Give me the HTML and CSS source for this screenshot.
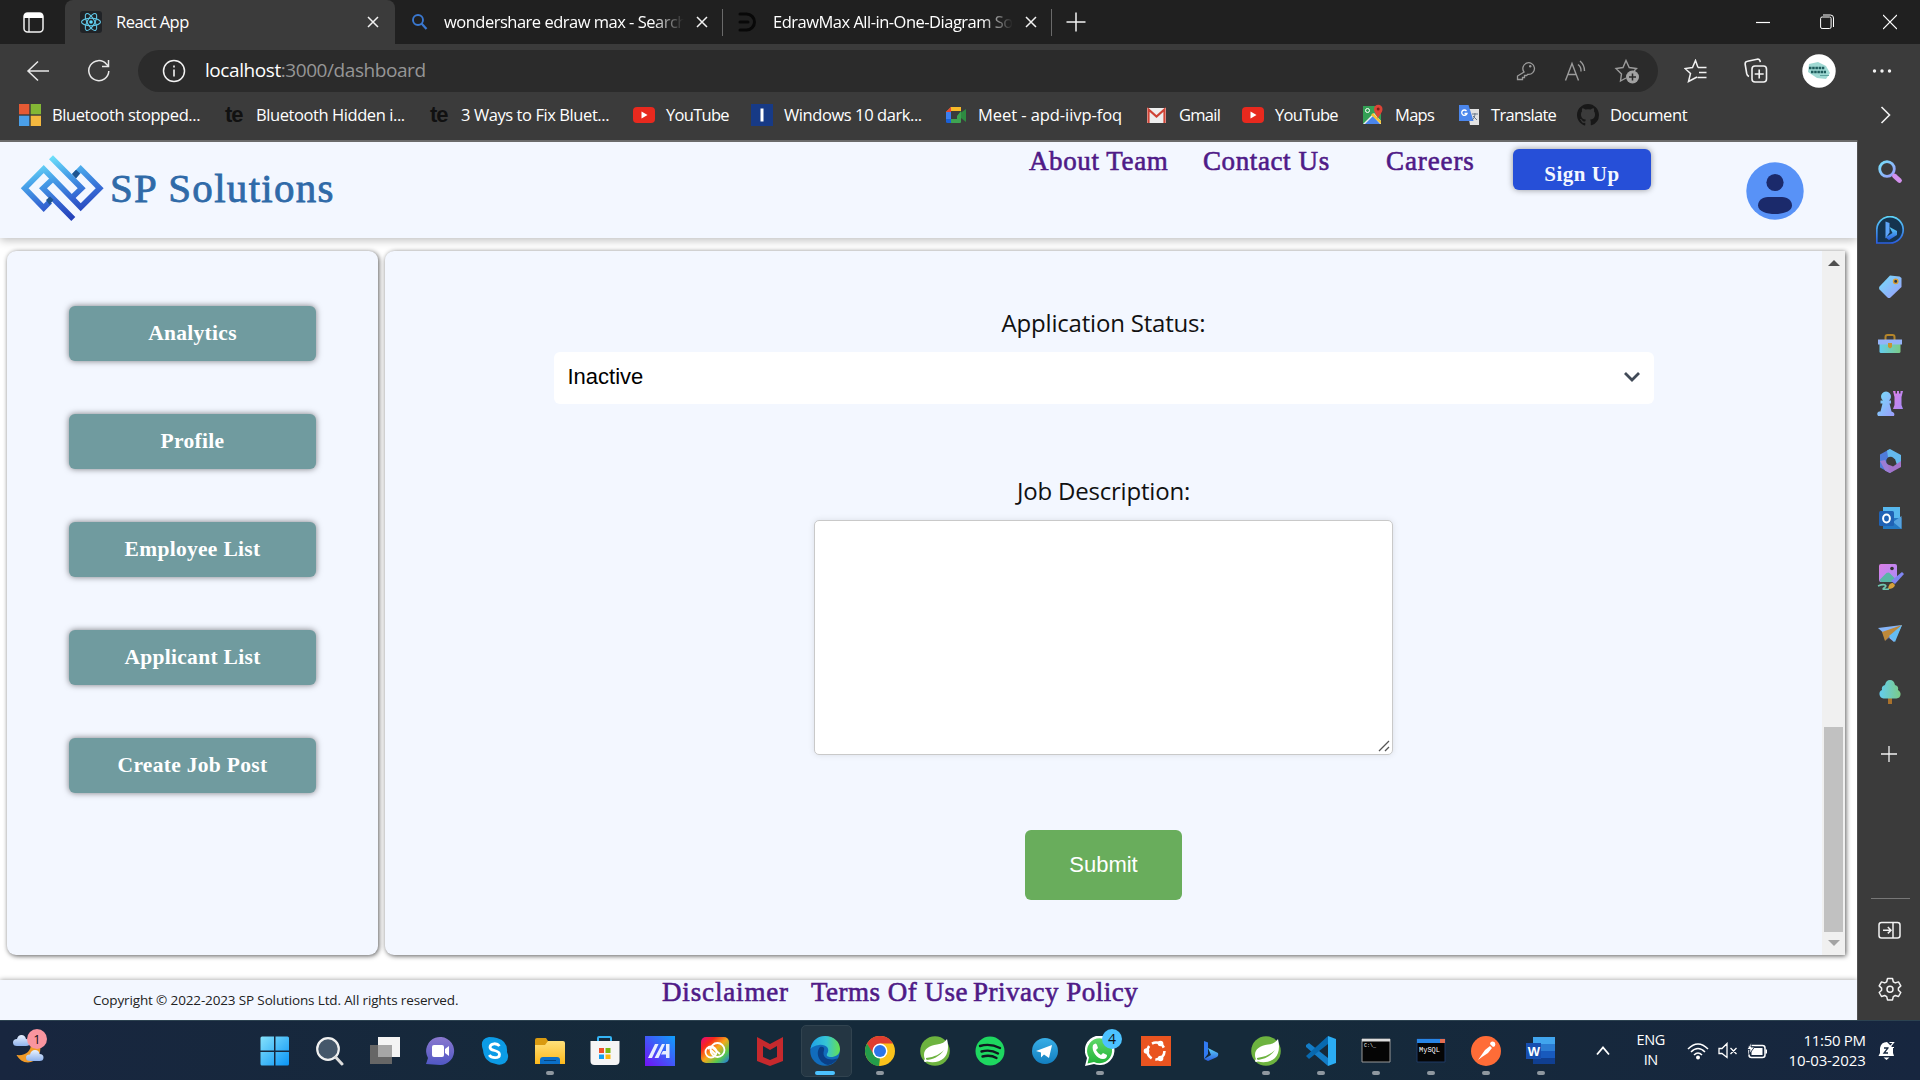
FILE: index.html
```html
<!DOCTYPE html>
<html lang="en">
<head>
<meta charset="utf-8">
<title>React App</title>
<link rel="stylesheet" href="styles.css">
</head>
<body>
<svg class="defs" width="0" height="0" aria-hidden="true">
  <defs>
    <linearGradient id="sky" x1="0" y1="0" x2="1" y2="1"><stop offset="0" stop-color="#74dff9"/><stop offset="1" stop-color="#9c9cfb"/></linearGradient>
    <linearGradient id="logo" gradientUnits="userSpaceOnUse" x1="30" y1="2" x2="48" y2="66"><stop offset="0" stop-color="#6fe3fb"/><stop offset=".35" stop-color="#469fe8"/><stop offset=".7" stop-color="#3465d2"/><stop offset="1" stop-color="#2440b8"/></linearGradient>
    <linearGradient id="pink" x1="0" y1="0" x2="1" y2="1"><stop offset="0" stop-color="#dc7fe6"/><stop offset="1" stop-color="#a88cf8"/></linearGradient>
    <linearGradient id="green" x1="0" y1="0" x2="1" y2="0"><stop offset="0" stop-color="#63cdf0"/><stop offset="1" stop-color="#7ccb86"/></linearGradient>
    <linearGradient id="bing" x1="0" y1="0" x2="0" y2="1"><stop offset="0" stop-color="#5ed4f8"/><stop offset="1" stop-color="#2a5ee0"/></linearGradient>
    <linearGradient id="win" x1="0" y1="0" x2="1" y2="1"><stop offset="0" stop-color="#85e2fb"/><stop offset="1" stop-color="#0a94f5"/></linearGradient>
    <linearGradient id="chat" x1="0" y1="0" x2="0" y2="1"><stop offset="0" stop-color="#8a78cf"/><stop offset="1" stop-color="#5057c4"/></linearGradient>
    <linearGradient id="folder" x1="0" y1="0" x2="0" y2="1"><stop offset="0" stop-color="#ffe07a"/><stop offset="1" stop-color="#fcb81c"/></linearGradient>
    <linearGradient id="arm" x1="0" y1="1" x2="1" y2="0"><stop offset="0" stop-color="#7310f5"/><stop offset="1" stop-color="#0fa0fb"/></linearGradient>
    <linearGradient id="cc" x1="0" y1="0" x2="1" y2="1"><stop offset="0" stop-color="#e5077f"/><stop offset=".25" stop-color="#f7281a"/><stop offset=".5" stop-color="#f7a81a"/><stop offset=".75" stop-color="#57c94d"/><stop offset="1" stop-color="#1c6ff0"/></linearGradient>
    <linearGradient id="edge1" x1="0" y1="0" x2="1" y2="0"><stop offset="0" stop-color="#1fa2e8"/><stop offset=".55" stop-color="#36c5d4"/><stop offset="1" stop-color="#66e14e"/></linearGradient>
    <linearGradient id="tg" x1="0" y1="0" x2="0" y2="1"><stop offset="0" stop-color="#38aee6"/><stop offset="1" stop-color="#127fc0"/></linearGradient>
    <linearGradient id="wa" x1="0" y1="0" x2="0" y2="1"><stop offset="0" stop-color="#5fd968"/><stop offset="1" stop-color="#23b33a"/></linearGradient>
    <linearGradient id="cloud" x1="0" y1="0" x2="0" y2="1"><stop offset="0" stop-color="#e8f2ff"/><stop offset="1" stop-color="#8fb2ec"/></linearGradient>
    <symbol id="i-x" viewBox="0 0 12 14"><path d="M1 2l10 10M11 2L1 12" stroke="#f2f2f2" stroke-width="1.5" fill="none"/></symbol>
    <symbol id="i-yt" viewBox="0 0 22 22"><rect y="3" width="22" height="16" rx="4" fill="#e8291e"/><path d="M8.500 7.500v7l6-3.500z" fill="#fff"/></symbol>
    <symbol id="i-spring" viewBox="0 0 30 30"><circle cx="15" cy="15" r="14.800" fill="#6db33f"/><path d="M27 3c-2 3-5 5-10 5.500C9 9.500 4 13 4 19c0 3 1 5 3 6.500C13 27 20 26 24 22c4-4 5-11 3-19z" fill="#fff"/><path d="M6 24c7-.500 13-3 18-10-4 4-9 7-18 8z" fill="#6db33f"/><circle cx="5.500" cy="24.500" r="1.500" fill="#fff"/></symbol>
  </defs>
</svg>
<div class="screen">
  <header class="tabs">
    <div class="tab-actions"><svg width="21" height="21" viewBox="0 0 21 21"><rect x="1" y="1" width="19" height="19" rx="3.500" fill="none" stroke="#f2f2f2" stroke-width="1.500"/><path d="M1 6V4a3 3 0 0 1 3-3h13a3 3 0 0 1 3 3v2z" fill="#fff"/><path d="M6 6v14" stroke="#f2f2f2" stroke-width="1.300"/></svg></div>
    <div class="tab tab-active">
      <svg width="22" height="22" viewBox="0 0 22 22"><rect width="22" height="22" rx="3" fill="#202327"/><g fill="none" stroke="#61c8e8" stroke-width="1.100"><ellipse cx="11" cy="11" rx="9.500" ry="3.700"/><ellipse cx="11" cy="11" rx="9.500" ry="3.700" transform="rotate(60 11 11)"/><ellipse cx="11" cy="11" rx="9.500" ry="3.700" transform="rotate(120 11 11)"/></g><circle cx="11" cy="11" r="1.800" fill="#61dafb"/></svg>
      <span class="tab-title">React App</span>
      <svg width="12" height="14"><use href="#i-x"/></svg>
    </div>
    <div class="tab tab-search">
      <svg width="22" height="22" viewBox="0 0 22 22"><circle cx="9" cy="9" r="5" fill="none" stroke="#3a78d0" stroke-width="1.900"/><path d="M12.500 12.500l5 5.500" stroke="#3a78d0" stroke-width="2.200"/></svg>
      <span class="tab-title">wondershare edraw max - Search</span>
      <svg width="12" height="14"><use href="#i-x"/></svg>
    </div>
    <div class="tab tab-edraw">
      <svg width="22" height="22" viewBox="0 0 22 22"><path d="M3 3h6.500a8 8 0 0 1 0 16H3M3 11h8" fill="none" stroke="#080808" stroke-width="3" stroke-linecap="round"/></svg>
      <span class="tab-title">EdrawMax All-in-One-Diagram So</span>
      <svg width="12" height="14"><use href="#i-x"/></svg>
    </div>
    <svg class="new-tab" width="20" height="20" viewBox="0 0 20 20"><path d="M10 .500v19M.500 10h19" stroke="#f2f2f2" stroke-width="1.500"/></svg>
    <div class="window-buttons">
      <svg width="14" height="16" viewBox="0 0 14 16"><path d="M0 8.500h14" stroke="#fff" stroke-width="1.200"/></svg>
      <svg width="14" height="16" viewBox="0 0 14 16"><rect x=".600" y="3" width="10.500" height="11.500" rx="1.500" fill="none" stroke="#fff"/><path d="M3 1h7.500a3 3 0 0 1 3 3v9" fill="none" stroke="#fff"/></svg>
      <svg width="14" height="16" viewBox="0 0 14 16"><path d="M0 1l14 14M14 1L0 15" stroke="#fff" stroke-width="1.200"/></svg>
    </div>
  </header>

  <div class="toolbar">
    <svg class="back" width="24" height="22" viewBox="0 0 24 22"><path d="M12 1.500L2 11l10 9.500M2 11h21" fill="none" stroke="#e8e8e8" stroke-width="1.500"/></svg>
    <svg class="reload" width="24" height="24" viewBox="0 0 24 24"><path d="M21.800 12a10 10 0 1 1-2.500-7l2 2M21.500 1v6.500H15" fill="none" stroke="#e8e8e8" stroke-width="1.500"/></svg>
    <div class="address">
      <svg width="24" height="24" viewBox="0 0 24 24"><circle cx="12" cy="12" r="10.500" fill="none" stroke="#f2f2f2" stroke-width="1.500"/><path d="M12 10.500v7M12 6.500v2" stroke="#f2f2f2" stroke-width="1.600"/></svg>
      <span class="url"><b>localhost</b>:3000/dashboard</span>
      <svg width="20" height="22" viewBox="0 0 20 22"><path d="M8 12.500a5.800 5.800 0 1 1 4 2.300L10.500 16H8.500v2H6.500v2H1.500v-3.500z" transform="translate(0 -.500)" fill="none" stroke="#9b9b9b" stroke-width="1.300"/><circle cx="14.200" cy="6.300" r="1.200" fill="#9b9b9b"/></svg>
      <svg width="24" height="24" viewBox="0 0 24 24"><path d="M2.500 21.500L9 4.500l6.500 17M5 15.500h8M15 5.500a8 8 0 0 1 3 7M17 2a13 13 0 0 1 4.500 10" fill="none" stroke="#9b9b9b" stroke-width="1.400"/></svg>
      <svg width="26" height="26" viewBox="0 0 26 26"><path d="M12 20l-5.500 3 1-7L2 10.500l7-1L12 2.500l3.200 7 7.300 1-2.500 2.500" fill="none" stroke="#9b9b9b" stroke-width="1.400"/><circle cx="18.500" cy="19" r="6.500" fill="#a2a2a2"/><path d="M18.500 15.500v7M15 19h7" stroke="#2b2b2b" stroke-width="1.500"/></svg>
    </div>
    <svg class="favs" width="24" height="24" viewBox="0 0 24 24"><path d="M14 8.500h8.500M15 13.500h7.500M13.500 18.500h9M14 8.500L11.500 1.500 8.500 8.500l-7.500 1 5.500 5L4.500 22.500 13 18" fill="none" stroke="#f2f2f2" stroke-width="1.500"/></svg>
    <svg class="collections" width="24" height="26" viewBox="0 0 24 26"><rect x="8" y="8" width="14.500" height="16" rx="3" fill="none" stroke="#f2f2f2" stroke-width="1.600"/><path d="M15.200 11.500v9M10.700 16h9M5 18.500C3.500 18 3 17 2.700 15.500L1.200 6.500c-.300-2 .500-3 2.300-3.300L13 1.200c2-.400 3 .600 3.300 3" fill="none" stroke="#f2f2f2" stroke-width="1.600"/></svg>
    <svg class="profile" width="34" height="34" viewBox="0 0 34 34"><circle cx="17" cy="17" r="16.700" fill="#fff"/><path d="M7 10l9-2 8 4 4 7-4 6-9-1-9-6z" fill="#9fd9d3"/><path d="M7 14h16M9 18h15" stroke="#1e5c5c" stroke-width="2.300" stroke-dasharray="2.500 .7"/><path d="M18 21.500h9" stroke="#4d9591" stroke-width=".8"/></svg>
    <svg class="more" width="20" height="6" viewBox="0 0 20 6"><circle cx="2.500" cy="3" r="1.700" fill="#f2f2f2"/><circle cx="10" cy="3" r="1.700" fill="#f2f2f2"/><circle cx="17.500" cy="3" r="1.700" fill="#f2f2f2"/></svg>
  </div>

  <nav class="bookmarks">
    <a><svg width="22" height="22"><path fill="#e55a34" d="M0 0h10.300v10.300H0z"/><path fill="#83b735" d="M11.700 0H22v10.300H11.700z"/><path fill="#4a9fe8" d="M0 11.700h10.300V22H0z"/><path fill="#f4b83f" d="M11.700 11.700H22V22H11.700z"/></svg><span>Bluetooth stopped...</span></a>
    <a><i class="te">te</i><span>Bluetooth Hidden i...</span></a>
    <a><i class="te">te</i><span>3 Ways to Fix Bluet...</span></a>
    <a><svg width="22" height="22"><use href="#i-yt"/></svg><span class="tight">YouTube</span></a>
    <a><svg width="22" height="22"><path fill="#173a86" d="M0 0h22v22H0z"/><path fill="#fff" d="M9.500 4.500h3v13h-3z"/></svg><span>Windows 10 dark...</span></a>
    <a><svg width="22" height="22"><path d="M6 3h10v4H6v3H1V8z" fill="#f7b928"/><path d="M6 3v5H1z" fill="#e84435"/><path d="M1 8h5v7H1z" fill="#3c7ff0"/><path d="M1 15h5v4H2.500A1.500 1.500 0 0 1 1 17.500z" fill="#1a60d8"/><path d="M6 15h6v-3l4-5v11a1 1 0 0 1-1 1H6z" fill="#3ea351"/><path d="M16 8.500L21 5v13l-5-4z" fill="#2e8b41"/></svg><span class="loose">Meet - apd-iivp-foq</span></a>
    <a><svg width="22" height="22"><path fill="#eee" d="M1 4h19v15H1z"/><path d="M2.500 19V5.500l8 7 8-7V19" stroke="#cf4436" stroke-width="2.200" fill="none"/></svg><span class="tight">Gmail</span></a>
    <a><svg width="22" height="22"><use href="#i-yt"/></svg><span class="tight">YouTube</span></a>
    <a><svg width="22" height="22"><path fill="#34a055" d="M1 2h18v18H1z"/><path d="M1 20L12 9l7 8v3z" fill="#eee"/><path d="M3 20l8-8 7 8z" fill="#4a86ec"/><path d="M9 11l10 9v-3l-8-8z" fill="#f7c331"/><path d="M16 15c-1-4-4-6-4-10a4 4 0 0 1 8.500 0c0 4-3.500 6-4.500 10z" fill="#dc4436"/><circle cx="16.200" cy="5" r="1.500" fill="#7c1f19"/><circle cx="5.500" cy="6.500" r="2" stroke="#fff" fill="none"/></svg><span class="tight">Maps</span></a>
    <a><svg width="22" height="22"><path fill="#e2e2e2" d="M9 5h12v16H12z"/><path d="M1 1h9.500l5 16H1z" fill="#4b86ec"/><path d="M8.500 7A2.700 2.700 0 1 0 9 9.500H6.500" fill="none" stroke="#fff" stroke-width="1.300"/><path d="M14 10h6M17 9c0 3-1 6-3 7m1-4l4 4" stroke="#68788b" fill="none"/></svg><span class="tight">Translate</span></a>
    <a><svg width="22" height="22" viewBox="0 0 16 16"><path fill="#181818" d="M8 0C3.580 0 0 3.580 0 8c0 3.540 2.290 6.530 5.470 7.590.400.070.550-.170.550-.380v-1.490c-2.230.480-2.700-1.070-2.700-1.070-.360-.920-.890-1.170-.890-1.170-.730-.500.050-.490.050-.490.810.060 1.230.830 1.230.830.720 1.230 1.880.870 2.340.660.070-.520.280-.870.510-1.070-1.780-.200-3.650-.890-3.650-3.950 0-.870.310-1.590.820-2.150-.080-.200-.360-1.020.080-2.120 0 0 .670-.210 2.200.820a7.600 7.600 0 0 1 4 0c1.530-1.040 2.200-.820 2.200-.820.440 1.100.160 1.920.080 2.120.510.560.820 1.270.820 2.150 0 3.070-1.870 3.750-3.650 3.950.290.250.540.730.540 1.480v2.200c0 .210.150.460.550.380A8 8 0 0 0 16 8c0-4.420-3.580-8-8-8z"/></svg><span>Document</span></a>
    <svg class="overflow" width="11" height="18" viewBox="0 0 11 18"><path d="M1.500 1l8 8-8 8" fill="none" stroke="#f2f2f2" stroke-width="1.600"/></svg>
  </nav>

  <div class="body">
    <div class="page">
      <header class="site-header">
        <div class="brand">
          <svg width="84" height="68" viewBox="0 0 84 68"><g fill="none" stroke="url(#logo)" stroke-width="5.600"><path d="M30 47.500L23.700 54 4.700 34.300 23.700 15l37 38.300 19-19L60.700 15 54 22"/><path d="M31 3.300l30.700 31L51.300 44.300"/><path d="M53.300 65L23 34.300l10-9.600"/></g><path d="M52 20l4-4.200 4 3.600-4 5zM26 46l4-3.500 3.500 3.200-4 5z" fill="#1f5590"/></svg>
          <span>SP Solutions</span>
        </div>
        <nav class="site-nav">
          <a>About Team</a><a>Contact Us</a><a>Careers</a>
          <button class="signup">Sign Up</button>
        </nav>
        <svg class="avatar" width="58" height="58" viewBox="0 0 58 58"><circle cx="29" cy="29" r="28.700" fill="#5892f7"/><circle cx="29" cy="20.500" r="8.600" fill="#1b2a6b"/><path d="M22 35h14c6 0 10 4 10 8.500 0 6-9 8.500-17 8.500s-17-2.500-17-8.500C12 39 16 35 22 35z" fill="#1b2a6b"/></svg>
      </header>
      <main class="panels">
        <aside class="menu">
          <button>Analytics</button>
          <button>Profile</button>
          <button>Employee List</button>
          <button>Applicant List</button>
          <button>Create Job Post</button>
        </aside>
        <section class="content">
          <form class="job">
            <label>Application Status:</label>
            <div class="select"><span>Inactive</span><svg width="18" height="12" viewBox="0 0 18 12"><path d="M2 2l7 7 7-7" fill="none" stroke="#414a57" stroke-width="2.800"/></svg></div>
            <label class="second">Job Description:</label>
            <div class="textarea"><svg width="12" height="12" viewBox="0 0 12 12"><path d="M1 11L11 1M7 11l4-4" stroke="#555" stroke-width="1.300"/></svg></div>
            <button class="submit" type="button">Submit</button>
          </form>
          <div class="scrollbar"><svg width="12" height="6"><path d="M0 6l6-6 6 6z" fill="#505050"/></svg><div class="thumb"></div><svg width="12" height="6"><path d="M0 0l6 6 6-6z" fill="#a3a3a3"/></svg></div>
        </section>
      </main>
      <footer class="site-footer">
        <span class="copy">Copyright © 2022-2023 SP Solutions Ltd. All rights reserved.</span>
        <a>Disclaimer</a><a>Terms Of Use</a><a>Privacy Policy</a>
      </footer>
    </div>
    <aside class="sidebar">
      <div><svg width="28" height="28"><circle cx="11" cy="11" r="7.300" fill="none" stroke="url(#sky)" stroke-width="2.800"/><path d="M18.500 18l5 4.500" stroke="#d391ee" stroke-width="4.800" stroke-linecap="round"/></svg></div>
      <div><svg width="28" height="28"><path d="M.800 27V14a13.200 13.200 0 1 1 13.200 13z" fill="#15344f" stroke="url(#bing)" stroke-width="1.700"/><path d="M9.500 5.500l4 1.500v9.500l-4 6z" fill="#5da4f9"/><path d="M13.500 11l7.500 4v4l-8 5-3.500-2.500 7-4.500z" fill="url(#bing)"/></svg></div>
      <div><svg width="28" height="28"><path d="M14 2.500L23.500 3.500 25.500 5v9L14.500 24.500q-1.500 1-3 0l-8-8q-1-1.500 0-3z" fill="url(#sky)"/><circle cx="19.700" cy="8.300" r="2.200" fill="#27384a" stroke="#d99f36" stroke-width="1.400"/></svg></div>
      <div><svg width="28" height="28"><path d="M9.500 9V6q0-2 2-2h5q2 0 2 2v3" fill="none" stroke="#b5852a" stroke-width="2"/><path d="M3.500 12h21v8.500q0 1.500-1.500 1.500H5q-1.500 0-1.500-1.500z" fill="url(#green)"/><path d="M2 8.500h24v5H2z" fill="#95b3f8"/><path d="M12 12h4v4l-2 1.500-2-1.500z" fill="#c79532"/></svg></div>
      <div><svg width="28" height="28"><path d="M17 2h2.500v2.500H21V2h2v2.500h1.500V2H27l-1.500 6v8l1.500 4H17l1.500-4V8z" fill="url(#pink)"/><path d="M2 27q-2-3 1-4.500h1.500l2-8H4.500v-3H7a5 5 0 1 1 6 0h2v3h-1.500l2 8q4 1 2.500 4.500z" fill="url(#sky)"/></svg></div>
      <div><svg width="28" height="28"><path d="M14 2L4 7.500v13L14 26l3-2-4-4V9z" fill="#4f7cda"/><path d="M11 3.500L14 2l11 6v8l-4 2-2-6-7-2z" fill="#64b9ee"/><path d="M25 14v6L14 26 9 23.500l2-7 6 3z" fill="#a374ca"/><path d="M4 14l5 9.500 5 2.500-2-7-3-6z" fill="#9c7dd4"/><circle cx="14.500" cy="14" r="4.300" fill="#3b3b3b"/></svg></div>
      <div><svg width="28" height="28"><path d="M7 3h17v18H7z" fill="#57b8ee"/><path d="M7 14h18.500v11H7z" fill="#2478c2"/><path d="M17 18l8.500-6v13z" fill="#56a3df"/><rect x="3" y="7" width="15" height="15" rx="1.500" fill="#2062b4"/><ellipse cx="10.500" cy="14.500" rx="3.400" ry="3.900" fill="none" stroke="#fff" stroke-width="2"/></svg></div>
      <div><svg width="28" height="28"><rect x="3" y="2" width="18" height="18" rx="2" fill="url(#pink)"/><path d="M3.500 18l7-7q2-1 3 0l7 7-1 2H5z" fill="#58b6a6"/><circle cx="16" cy="6.500" r="1.800" fill="#333"/><path d="M15 19L26 10l2 2-9 10z" fill="#8086f3"/><path d="M12 27q1-7 5-6l2 2q-1 4-7 4z" fill="#d5a13a"/><path d="M2 24q5-2 7-1t-1 3 5 1" fill="none" stroke="#70c5af" stroke-width="1.700"/></svg></div>
      <div class="plane"><svg width="28" height="28"><path d="M2 5L26 2l-8 17-6-5z" fill="#86b5f8"/><path d="M26 2L6 9l3 9z" fill="#bd893b"/><path d="M26 2L9 18l4-3z" fill="#4c68b8"/><path d="M26 2L13 13l6 6z" fill="#65bdf2"/></svg></div>
      <div><svg width="28" height="28"><path d="M12 18h4v8h-4z" fill="#a9712b"/><path d="M14 2q4 0 5 5 4 1 3 5 3 2 2.500 5t-4 3.500H7.500q-3.500-.500-4-4T6 12q-1-4 3-5 1-5 5-5z" fill="url(#green)"/></svg></div>
      <div class="add"><svg width="18" height="18"><path d="M9 1v16M1 9h16" stroke="#f2f2f2" stroke-width="1.300"/></svg></div>
      <hr>
      <div><svg width="24" height="20"><rect x="1" y="1.500" width="21" height="15.500" rx="2.500" fill="none" stroke="#f2f2f2" stroke-width="1.500"/><path d="M15 1.500V17M5 9.200h8M9.800 6l3.200 3.200-3.200 3.200" stroke="#f2f2f2" stroke-width="1.500" fill="none"/></svg></div>
      <div><svg width="24" height="24" viewBox="0 0 24 24"><path d="M9.500 1.500h5l.8 3.300 2 1.100 3.200-1 2.300 4-2.400 2.200v2.200l2.400 2.200-2.300 4-3.200-1-2 1.100-.8 3.300h-5l-.8-3.300-2-1.100-3.200 1-2.300-4 2.400-2.200v-2.200L1.200 8.900l2.300-4 3.200 1 2-1.100z" fill="none" stroke="#f2f2f2" stroke-width="1.500" stroke-linejoin="round"/><circle cx="12" cy="12.200" r="3" fill="none" stroke="#f2f2f2" stroke-width="1.500"/></svg></div>
    </aside>
  </div>

  <footer class="taskbar">
    <div class="weather"><svg width="38" height="38"><path d="M27 12c2 11-4 18-12 18.500-5 0-9-3-11.500-7.500C13 24 18 19 18 12z" fill="#f19a27"/><path d="M4 14q-4 0-4-3.500t4-3.500q1-4 4.500-4T13 7q4 0 4 3.500T13 14z" fill="url(#cloud)"/><path d="M17 29q-4 0-4-3.300t4-3.200q1-4.500 5-4.500t4.500 4q4 0 4 3.500T26.500 29z" fill="url(#cloud)"/></svg><b class="badge">1</b></div>
    <div class="apps">
      <div><svg width="30" height="30"><path d="M.500 2q0-1.500 1.500-1.500h12v14H.500zM15.500.500h12q1.500 0 1.500 1.500v12.500H15.500zM.500 16H14v13.500H2q-1.500 0-1.500-1.500zM15.500 16H29v12q0 1.500-1.500 1.500h-12z" fill="url(#win)"/></svg></div>
      <div><svg width="30" height="30"><circle cx="13" cy="13" r="10.800" fill="#45576a" stroke="#f0f0f0" stroke-width="2.200"/><path d="M20.500 21l6.500 7" stroke="#ddd" stroke-width="3" stroke-linecap="round"/></svg></div>
      <div><svg width="30" height="30"><path d="M8 1h22v20H8z" fill="#f4f4f4"/><path d="M0 9h22v19H0z" fill="#666"/><path d="M8 9h14v12H8z" fill="#a6a6a6"/></svg></div>
      <div><svg width="30" height="30"><path d="M1 28l2-6A14 14 0 1 1 15 29z" fill="url(#chat)"/><rect x="7" y="9" width="12" height="12" rx="2" fill="#fff"/><path d="M20 13l4-3v10l-4-3z" fill="#fff"/></svg></div>
      <div><svg width="30" height="30"><path d="M9 1q5 0 8 1 11 3 10 14 3 7-2 11-5 3-9 1Q4 26 3 14-1 3 9 1z" fill="#0c9be6"/><path d="M19.500 10q-2-2.500-5.500-2.200-4 .400-4 3.400 0 2.300 4.500 3.300 5 1.200 5 4 0 3.200-4.500 3.200-4 0-5.800-2.700" fill="none" stroke="#fff" stroke-width="2.800"/></svg></div>
      <div class="run"><svg width="30" height="30"><path d="M0 4q0-2 2-2h9l2 3v5H0z" fill="#d99a10"/><path d="M0 9h10l3-4h15q2 0 2 2v21H0z" fill="url(#folder)"/><path d="M5 28v-4q0-3 3-3h14q3 0 3 3v4z" fill="#0b6fc8"/><path d="M9 24.500h12" stroke="#06447f"/></svg></div>
      <div><svg width="30" height="30"><path d="M8 7V2q0-1 1-1h11q1 0 1 1v5" stroke="#34b4f4" stroke-width="2" fill="none"/><path d="M.500 5h29v20q0 4-4 4h-21q-4 0-4-4z" fill="#f5f5f5"/><path d="M9 12h5v5H9z" fill="#f0502a"/><path d="M15.500 12h5v5h-5z" fill="#7cb910"/><path d="M9 18.500h5v4.500H9z" fill="#139ff0"/><path d="M15.500 18.500h5v4.500h-5z" fill="#fbb810"/></svg></div>
      <div><svg width="30" height="30"><path d="M0 0h30v30H0z" fill="url(#arm)"/><path d="M3 22L10 8h3.500L7 22zM9.500 22L17 8h3l-6.500 14zM21 8h3.500v14H21v-3.500h-5l2-3.500h3z" fill="#e8eeff"/></svg></div>
      <div><svg width="30" height="30"><rect x="1" y="1" width="28" height="26" rx="5" fill="url(#cc)"/><g fill="none" stroke="#fff" stroke-width="1.800"><circle cx="11" cy="16" r="5.500"/><circle cx="17.500" cy="14" r="7"/><path d="M20 18l-7-6q-3-1-5 1M16 19l-5-5"/></g></svg></div>
      <div><svg width="30" height="30"><path d="M2 1l13 7 13-7v24l-13 5L2 25zM8 10v11l7 3 7-3V10l-7 4z" fill="#c6292d" fill-rule="evenodd"/></svg></div>
      <div class="run current"><svg width="30" height="30"><circle cx="15" cy="15" r="14.800" fill="#116cbc"/><path d="M.500 13C2 4 8 0 15 0c9 0 15 6 15 13 0 6-5 8-9 8-3 0-5-1-4-3 4-6-2-10-8-9-4 .500-7 2-8.500 4z" fill="url(#edge1)"/><path d="M10 11c-5 6-1 16 8 18 5-1 8-4 10-7-6 3-17 2-14-8 1-3-2-4-4-3z" fill="#0a3f86"/></svg></div>
      <div class="run"><svg width="30" height="30"><circle cx="15" cy="15" r="15" fill="#fbc21b"/><path d="M2 7.500A15 15 0 0 1 28 7.500H15L8 19z" fill="#df3d30"/><path d="M2 7.500L9 19l6 3-1 8A15 15 0 0 1 2 7.500z" fill="#249c4b"/><circle cx="15" cy="15" r="7.500" fill="#fff"/><circle cx="15" cy="15" r="6" fill="#2d75e8"/></svg></div>
      <div><svg width="30" height="30"><use href="#i-spring"/></svg></div>
      <div><svg width="30" height="30"><circle cx="15" cy="15" r="14.500" fill="#1ed760"/><path d="M5 10q10-3 20 2M6.500 15.500q9-2.500 16.500 2M7.500 20.500q8-2 14 1.500" stroke="#101820" stroke-width="2.400" stroke-linecap="round" fill="none"/></svg></div>
      <div><svg width="30" height="30"><circle cx="15" cy="15" r="13" fill="url(#tg)"/><path d="M6 15l16-6-3 13-5-3.500-3 3v-5z" fill="#fff"/></svg></div>
      <div class="run"><svg width="30" height="30"><path d="M0 30l2-8A14.800 14.800 0 1 1 9 28z" fill="#fff"/><path d="M2.500 27.500l1.500-6A12.500 12.500 0 1 1 9 26z" fill="url(#wa)"/><path d="M8 9q3-3 4 0l1 3-2 2q2 4 5 5l2-2 4 2q0 4-4 4C12 23 6 15 8 9z" fill="#fff"/></svg><b class="badge">4</b></div>
      <div><svg width="30" height="30"><path d="M0 0h30v30H0z" fill="#e95420"/><circle cx="15" cy="15" r="8.500" fill="none" stroke="#fff" stroke-width="2.600" stroke-dasharray="14 3.800"/><circle cx="5.500" cy="15" r="2.800" fill="#fff"/><circle cx="19.500" cy="7.500" r="2.800" fill="#fff"/><circle cx="19.500" cy="22.500" r="2.800" fill="#fff"/></svg></div>
      <div><svg width="30" height="30"><path d="M8 5l4 1.500V18l-4 5z" fill="#317bf3"/><path d="M12 12l10 5q1 3-2 4.500L12 25l-4-2 7-4z" fill="url(#bing)"/></svg></div>
      <div class="run"><svg width="30" height="30"><use href="#i-spring"/></svg></div>
      <div class="run"><svg width="30" height="30"><path d="M22 0l8 3v24l-8 3z" fill="#2bacf3"/><path d="M0 9l3-2 19 15v8L0 11z" fill="#147dc7"/><path d="M0 20L22 0v8L3 23z" fill="#0869af"/></svg></div>
      <div class="run"><svg width="30" height="30"><path d="M1 3h28v23H1z" fill="#050505" stroke="#999"/><path d="M1 3h28v2.500H1z" fill="#ddd"/><text x="3" y="11" class="prompt">C:\_</text></svg></div>
      <div class="run"><svg width="30" height="30"><path d="M1 3h28v23H1z" fill="#050505" stroke="#1f3a66"/><path d="M1 3h28v4H1z" fill="#2785e5"/><path d="M24 3h5v4h-5z" fill="#e26d51"/><text x="3" y="16" class="mysql">MySQL</text></svg></div>
      <div class="run"><svg width="30" height="30"><circle cx="15" cy="15" r="15" fill="#ff6c37"/><path d="M7 24l7-10 5-4 2 2-4 5-6 4zM19 8a2.700 2.700 0 1 1 3 3z" fill="#fff"/></svg></div>
      <div class="run"><svg width="30" height="30"><path d="M7 1h22v7H7z" fill="#41a5ee"/><path d="M7 8h22v7H7z" fill="#2b7cd3"/><path d="M7 15h22v7H7z" fill="#185abd"/><path d="M7 22h22v6H7z" fill="#103f91"/><path d="M0 7h15v16H0z" fill="#174fb0"/><text x="1.800" y="19.500" class="word">W</text></svg></div>
    </div>
    <svg class="tray-up" width="14" height="10"><path d="M1 8.500l6-7 6 7" fill="none" stroke="#fff" stroke-width="1.800"/></svg>
    <div class="lang">ENG<br>IN</div>
    <div class="status">
      <svg width="22" height="18"><g fill="none" stroke="#fff" stroke-width="1.500"><path d="M1 7q10-10 20 0M4 10q7-7 14 0M7 13q4-4 8 0"/></g><circle cx="11" cy="15.500" r="2" fill="#fff"/></svg>
      <svg width="20" height="18"><path d="M1 6.500h3l5-5v14l-5-4H1zM12.500 6l6 6M18.500 6l-6 6" fill="none" stroke="#fff" stroke-width="1.300"/></svg>
      <svg width="22" height="18"><rect x="2" y="3.500" width="16" height="12" rx="2.500" fill="none" stroke="#fff" stroke-width="1.500"/><path d="M4.500 6h11v7h-11zM18.500 7.500H20v4h-1.500z" fill="#fff"/><path d="M4.500 0L0 7.500h3l-1 5 5.500-7.500H4z" fill="#fff" stroke="#17283f" stroke-width=".900"/></svg>
    </div>
    <div class="clock"><span>11:50 PM</span><br><span class="date">10-03-2023</span></div>
    <svg class="bell" width="18" height="20"><path d="M2 12V7q1-6 7-6l6 6v5l1 3H.500zM5.500 16.500h6l-3 2.500z" fill="#fff"/><path d="M6 7h4l-4 5h4" stroke="#17283f" stroke-width="1.300" fill="none"/><path d="M11.500 1.500h4l-4 5h4.500" stroke="#fff" stroke-width="1.200" fill="none"/></svg>
  </footer>
</div>
</body>
</html>
```
FILE: styles.css
```css
* { box-sizing: border-box; }
body { margin: 0; background: #202020; font-family: "Open Sans", "Noto Sans", sans-serif; }
button { border: 0; padding: 0; font-family: inherit; }
svg { display: block; flex: none; }
.defs { position: absolute; }
.screen { display: flex; flex-direction: column; width: 1920px; height: 1080px; overflow: hidden; }

/* tab strip */
.tabs { display: flex; align-items: center; height: 44px; background: #202020; color: #fff; font-size: 16.5px; letter-spacing: -.5px; white-space: nowrap; }
.tab-actions { width: 65px; padding-left: 23px; }
.tab { display: flex; align-items: center; height: 44px; }
.tab-title { flex: 1; overflow: hidden; margin: 0 12px 0 14px; line-height: 26px; }
.tab-active { width: 330px; padding: 0 16px 0 15px; background: #3b3b3b; border-radius: 8px 8px 0 0; }
.tab-search { width: 328px; height: 27px; padding: 0 14px 0 14px; border-right: 1px solid #6a6a6a; }
.tab-search .tab-title { margin-left: 13px; }
.tab-search .tab-title, .tab-edraw .tab-title { mask-image: linear-gradient(90deg, #000 87%, transparent); }
.tab-edraw { width: 329px; height: 27px; padding: 0 14px 0 14px; border-right: 1px solid #6a6a6a; }
.new-tab { margin-left: 14px; }
.window-buttons { display: flex; gap: 49.5px; margin-left: auto; padding-right: 23px; }

/* toolbar */
.toolbar { display: flex; align-items: center; height: 54px; background: #3b3b3b; }
.back { margin-left: 26px; }
.reload { margin-left: 37px; }
.address { display: flex; align-items: center; width: 1520px; height: 42px; margin-left: 27px; padding: 0 18px 0 24px; border-radius: 21px; background: #2b2b2b; }
.url { flex: 1; margin-left: 19px; padding-bottom: 2px; font-size: 19px; letter-spacing: -.43px; color: #969696; }
.url b { font-weight: 400; color: #fff; }
.address svg + svg { margin-left: 27px; }
.favs { margin-left: 26px; }
.collections { margin-left: 36px; }
.profile { margin-left: 34px; }
.more { margin-left: 36px; }

/* bookmarks */
.bookmarks { display: grid; grid-template-columns: 204px 205px 205px 118px 194px 201px 96px 120px 96px 119px 303px auto; align-items: center; height: 42px; padding: 0 0 8px 19px; background: #3b3b3b; color: #fff; font-size: 16.5px; letter-spacing: -.42px; white-space: nowrap; }
.bookmarks a { display: flex; align-items: center; gap: 11px; }
.bookmarks span { padding-bottom: 2px; }
.bookmarks .tight { letter-spacing: -.7px; }
.bookmarks .loose { letter-spacing: -.07px; }
.te { width: 22px; padding-left: 2px; font: bold 22px/22px "Liberation Sans", sans-serif; letter-spacing: -1px; color: #111; }

/* page */
.body { display: grid; grid-template-columns: 1857px 63px; height: 880px; }
.page { display: flex; flex-direction: column; border-top: 2px solid #6b6b6b; background: #fff; overflow: hidden; }
.site-header { display: flex; height: 96px; padding-left: 20px; background: #f3f7ff; box-shadow: 0 2px 9px rgba(0, 0, 0, .27); }
.brand { display: flex; align-items: center; width: 1009px; gap: 6px; padding-bottom: 4px; font: 41px/60px "Liberation Serif", serif; letter-spacing: 1.3px; color: #2f6aa8; -webkit-text-stroke: .8px #2f6aa8; }
.site-nav { display: flex; width: 717px; font: 27px/38px "Liberation Serif", serif; letter-spacing: .6px; color: #4f1a87; -webkit-text-stroke: .6px #4f1a87; }
.site-nav a:nth-child(1) { width: 174px; }
.site-nav a:nth-child(2) { width: 183px; }
.site-nav a:nth-child(3) { width: 127px; letter-spacing: .9px; }
.signup { width: 138px; height: 41px; margin-top: 7px; padding-top: 9px; border-radius: 6px; background: #264fd8; box-shadow: 0 0 6px rgba(0, 0, 0, .4); color: #f3f7ff; font: bold 21px/32px "Liberation Serif", serif; letter-spacing: .5px; -webkit-text-stroke: 0; }
.avatar { margin-top: 20px; }
.panels { display: grid; grid-template-columns: 371px 1460px; gap: 7px; height: 704px; margin: 13px 0 25px 7px; }
.menu, .content { border-radius: 9px; background: #f3f7ff; box-shadow: 1px 1px 5px rgba(0, 0, 0, .65); }
.menu { display: flex; flex-direction: column; align-items: center; gap: 53px; padding-top: 55px; }
.menu button { width: 247px; height: 55px; border-radius: 6px; background: #709b9f; box-shadow: 0 0 6px rgba(0, 0, 0, .5); color: #fff; font: bold 21.500px/53px "Liberation Serif", serif; letter-spacing: .3px; }
.content { display: flex; border-radius: 9px 0 0 9px; }
.job { display: flex; flex-direction: column; align-items: center; width: 1437px; padding-top: 54px; font-size: 24px; line-height: 36px; letter-spacing: -.2px; color: #111; }
.select { display: flex; align-items: center; justify-content: space-between; width: 1100px; height: 52px; margin-top: 11px; padding: 0 13px 2px 14px; border-radius: 6px; background: #fff; font: 22px/26px "Liberation Sans", sans-serif; letter-spacing: 0; color: #000; }
.second { margin-top: 69px; }
.textarea { display: flex; align-items: flex-end; justify-content: flex-end; width: 579px; height: 235px; margin-top: 11px; padding: 2px; border: 1px solid #c9c9c9; border-radius: 5px; background: #fff; box-shadow: 0 0 6px rgba(0, 0, 0, .1); }
.submit { width: 157px; height: 70px; margin-top: 75px; border-radius: 6px; background: #69ad5c; color: #fff; font: 22px/70px "Liberation Sans", sans-serif; }
.scrollbar { display: flex; flex-direction: column; align-items: center; width: 23px; padding: 9px 0; background: #f0f0f0; }
.thumb { width: 19px; height: 205px; margin: 461px 0 8px; background: #c1c1c1; }
.site-footer { display: flex; height: 40px; padding-left: 93px; background: #f3f7ff; box-shadow: 0 0 5px rgba(0, 0, 0, .4); font: 27px/24px "Liberation Serif", serif; letter-spacing: .5px; color: #4f1a87; -webkit-text-stroke: .6px #4f1a87; white-space: nowrap; }
.copy { width: 569px; font: 13.5px/41px "Open Sans", sans-serif; letter-spacing: -.14px; color: #222; -webkit-text-stroke: 0; }
.site-footer a:nth-child(2) { width: 149px; letter-spacing: .85px; }
.site-footer a:nth-child(3) { width: 162px; }

/* browser side bar */
.sidebar { display: flex; flex-direction: column; padding-top: 3px; border-left: 1px solid #505050; background: #3b3b3b; }
.sidebar div { display: flex; align-items: center; justify-content: center; flex: none; height: 57.750px; padding-left: 1px; }
.sidebar .plane { padding-top: 6px; }
.sidebar .add { height: 66px; padding: 0 1px 0 0; }
.sidebar hr { width: 39px; margin: 111px auto 4px 13px; border: 0; border-top: 1px solid #777; }

/* task bar */
.taskbar { display: flex; align-items: center; height: 60px; border-top: 1px solid #2c4250; background: linear-gradient(90deg, #18263f, #152a3a 35%, #152a3a 65%, #17263f); color: #fff; }
.weather { position: relative; width: 247.500px; padding-left: 13px; }
.apps { display: flex; }
.apps div { position: relative; display: flex; align-items: center; justify-content: center; width: 55.040px; height: 60px; }
.apps .run::after { content: ""; position: absolute; bottom: 6px; width: 8px; height: 4px; border-radius: 2px; background: #8f98a0; }
.apps .current::before { content: ""; position: absolute; left: 3px; top: 4px; width: 49px; height: 50px; border-radius: 5px; border: 1px solid #31434f; background: #243643; }
.apps .current svg { position: relative; }
.apps .current::after { width: 20px; background: #4cc2ff; }
.badge { position: absolute; left: 27px; top: -3px; width: 20px; height: 20px; border-radius: 50%; background: #f9959f; color: #111; font-size: 13px; font-weight: 400; line-height: 20px; text-align: center; }
.apps .badge { left: 29px; top: 8px; background: #4cc2ff; font-size: 14px; }
.prompt { font: 5px "Liberation Mono", monospace; fill: #fff; }
.mysql { font: 7px "Liberation Mono", monospace; fill: #fff; }
.word { font: bold 13px "Liberation Sans", sans-serif; fill: #fff; }
.tray-up { margin-left: 27.500px; }
.lang { width: 52px; margin-left: 15px; padding-bottom: 1px; text-align: center; font-size: 14.500px; line-height: 20px; letter-spacing: -.4px; }
.status { display: flex; gap: 9px; margin-left: 10px; }
.clock { width: 97px; padding-bottom: 1px; text-align: right; font-size: 15px; line-height: 20px; letter-spacing: -.3px; }
.date { letter-spacing: -.1px; }
.bell { margin-left: 12px; }
```
